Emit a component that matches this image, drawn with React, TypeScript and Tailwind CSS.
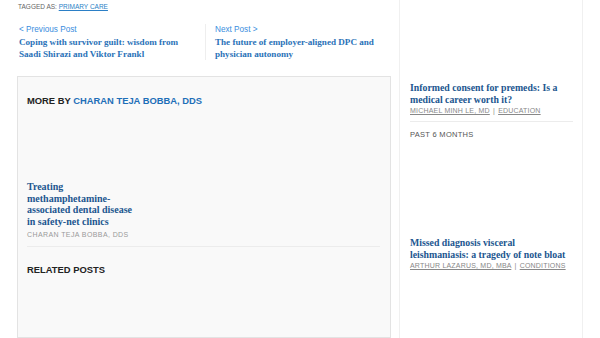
import React from "react";

const serif = { fontFamily: '"Liberation Serif", "DejaVu Serif", serif' };
const sans = { fontFamily: '"Liberation Sans", Arial, sans-serif' };

export default function App() {
  return (
    <div className="w-[600px] h-[338px] overflow-hidden bg-white flex" style={sans}>
      {/* main column */}
      <div className="w-[399px] flex flex-col">
        <div className="pl-[18px] pt-[2px] text-[6.5px] leading-[9px] text-[#666] uppercase">
          Tagged as: <span className="text-[#2b7fc6] underline">Primary care</span>
        </div>
        <div className="flex pl-[19px] mt-[13px]">
          <div className="w-[186px] pr-[18px]">
            <div className="text-[8.2px] leading-[11px] text-[#3a8dde]">&lt; Previous Post</div>
            <div className="text-[9.1px] leading-[12px] font-bold text-[#2a72b8] mt-[1px]" style={serif}>
              Coping with survivor guilt: wisdom from Saadi Shirazi and Viktor Frankl
            </div>
          </div>
          <div className="w-[175px] border-l border-[#eeeeee] pl-[9px]">
            <div className="text-[8.2px] leading-[11px] text-[#3a8dde]">Next Post &gt;</div>
            <div className="text-[9.1px] leading-[12px] font-bold text-[#2a72b8] mt-[1px]" style={serif}>
              The future of employer-aligned DPC and physician autonomy
            </div>
          </div>
        </div>
        <div className="ml-[17px] w-[374px] mt-[16px] flex-1 border border-[#e3e3e3] bg-[#f9f9f9] px-[9px] pt-[18px]">
          <div className="text-[9.4px] leading-[12px] font-bold text-[#222] uppercase">
            More by <span className="text-[#1e6fb8]">Charan Teja Bobba, DDS</span>
          </div>
          <div className="h-[74px]" />
          <div className="w-[112px] text-[10px] leading-[11.7px] font-bold text-[#21568f]" style={serif}>
            Treating methamphetamine-associated dental disease in safety-net clinics
          </div>
          <div className="text-[7px] leading-[9px] text-[#999] tracking-[0.4px] uppercase mt-[2px]">
            Charan Teja Bobba, DDS
          </div>
          <div className="border-b border-[#ececec] mt-[7px] mr-[1px]" />
          <div className="text-[9.4px] leading-[12px] font-bold text-[#222] uppercase mt-[17px]">
            Related posts
          </div>
        </div>
      </div>
      {/* sidebar */}
      <div className="w-[184px] border-l border-r border-[#f0f0f0] pl-[10px] pr-[6px] pt-[82px]">
        <div className="text-[9.8px] leading-[11.5px] font-bold text-[#21568f]" style={serif}>
          Informed consent for premeds: Is a medical career worth it?
        </div>
        <div className="text-[7px] leading-[9px] text-[#888] tracking-[0.2px] uppercase mt-[1px] whitespace-nowrap">
          <span className="underline">Michael Minh Le, MD</span> <span className="mx-[1px]">|</span>{" "}
          <span className="underline">Education</span>
        </div>
        <div className="border-b border-[#ececec] mt-[6px] mr-[3px]" />
        <div className="text-[7.5px] leading-[9px] text-[#555] tracking-[0.3px] uppercase mt-[8px]">
          Past 6 months
        </div>
        <div className="h-[98px]" />
        <div className="text-[9.8px] leading-[11.5px] font-bold text-[#21568f]" style={serif}>
          Missed diagnosis visceral leishmaniasis: a tragedy of note bloat
        </div>
        <div className="text-[7px] leading-[9px] text-[#888] tracking-[0.2px] uppercase mt-[1px] whitespace-nowrap">
          <span className="underline">Arthur Lazarus, MD, MBA</span> <span className="mx-[1px]">|</span>{" "}
          <span className="underline">Conditions</span>
        </div>
      </div>
      <div className="flex-1" />
    </div>
  );
}
